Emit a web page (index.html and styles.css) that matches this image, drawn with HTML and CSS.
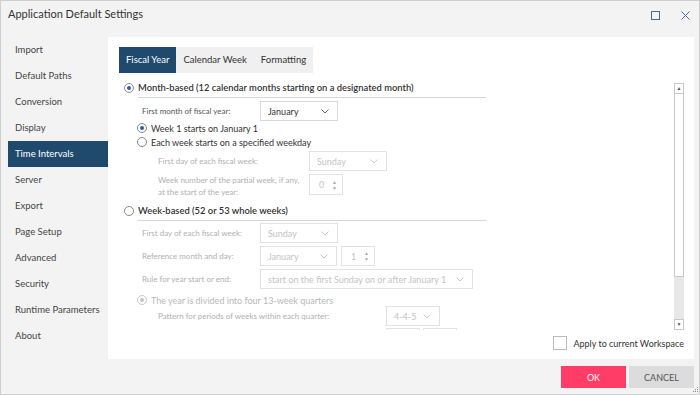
FILE: index.html
```html
<!DOCTYPE html>
<html lang="en">
<head>
    <meta charset="UTF-8">
    <title>Application Default Settings</title>
    <link rel="stylesheet" href="styles.css">
</head>
<body>
    <div class="window">
        <div class="titlebar">
            <span class="title">Application Default Settings</span>
            <div class="win-btns">
                <svg width="9" height="9" viewBox="0 0 9 9"><rect x="0.5" y="0.5" width="8" height="8" fill="none" stroke="#3d6ea3"/></svg>
                <svg width="9" height="9" viewBox="0 0 9 9"><path d="M0.5 0.5L8.5 8.5M8.5 0.5L0.5 8.5" stroke="#3d6ea3"/></svg>
            </div>
        </div>

        <div class="body">
            <ul class="nav">
                <li>Import</li>
                <li>Default Paths</li>
                <li>Conversion</li>
                <li>Display</li>
                <li class="active">Time Intervals</li>
                <li>Server</li>
                <li>Export</li>
                <li>Page Setup</li>
                <li>Advanced</li>
                <li>Security</li>
                <li>Runtime Parameters</li>
                <li>About</li>
            </ul>

            <section class="panel">
                <div class="tabs">
                    <span class="tab active">Fiscal Year</span>
                    <span class="tab">Calendar Week</span>
                    <span class="tab">Formatting</span>
                </div>

                <div class="scroll-area">
                    <div class="scroll-content">
                        <!-- Month based -->
                        <div class="group-head">
                            <span class="radio on"></span>
                            <span class="head-text">Month-based (12 calendar months starting on a designated month)</span>
                        </div>
                        <div class="field first-month">
                            <span class="label">First month of fiscal year:</span>
                            <div class="select w78">January <svg class="chev" width="8" height="5" viewBox="0 0 8 5"><polyline points="0.5,0.5 4,4 7.5,0.5" fill="none" stroke="#666"/></svg></div>
                        </div>
                        <div class="option">
                            <span class="radio on"></span>Week 1 starts on January 1
                        </div>
                        <div class="option">
                            <span class="radio"></span>Each week starts on a specified weekday
                        </div>
                        <div class="field sub disabled gap2">
                            <span class="label">First day of each fiscal week:</span>
                            <div class="select w78">Sunday <svg class="chev" width="8" height="5" viewBox="0 0 8 5"><polyline points="0.5,0.5 4,4 7.5,0.5" fill="none" stroke="#ccc"/></svg></div>
                        </div>
                        <div class="field sub disabled top gap3">
                            <span class="label two-line">Week number of the partial week, if any,<br>at the start of the year:</span>
                            <div class="spinner">0 <span class="arrows">&#9650;<br>&#9660;</span></div>
                        </div>

                        <!-- Week based -->
                        <div class="group-head second">
                            <span class="radio"></span>
                            <span class="head-text">Week-based (52 or 53 whole weeks)</span>
                        </div>
                        <div class="field disabled gap2">
                            <span class="label">First day of each fiscal week:</span>
                            <div class="select w78">Sunday <svg class="chev" width="8" height="5" viewBox="0 0 8 5"><polyline points="0.5,0.5 4,4 7.5,0.5" fill="none" stroke="#ccc"/></svg></div>
                        </div>
                        <div class="field disabled gap3">
                            <span class="label">Reference month and day:</span>
                            <div class="select w77">January <svg class="chev" width="8" height="5" viewBox="0 0 8 5"><polyline points="0.5,0.5 4,4 7.5,0.5" fill="none" stroke="#ccc"/></svg></div>
                            <div class="spinner day">1 <span class="arrows">&#9650;<br>&#9660;</span></div>
                        </div>
                        <div class="field disabled gap3">
                            <span class="label">Rule for year start or end:</span>
                            <div class="select w213">start on the first Sunday on or after January 1 <svg class="chev" width="8" height="5" viewBox="0 0 8 5"><polyline points="0.5,0.5 4,4 7.5,0.5" fill="none" stroke="#ccc"/></svg></div>
                        </div>
                        <div class="option disabled quarters">
                            <span class="radio on"></span>The year is divided into four 13-week quarters
                        </div>
                        <div class="field sub pattern disabled">
                            <span class="label">Pattern for periods of weeks within each quarter:</span>
                            <div class="select w54">4-4-5 <svg class="chev" width="8" height="5" viewBox="0 0 8 5"><polyline points="0.5,0.5 4,4 7.5,0.5" fill="none" stroke="#ccc"/></svg></div>
                        </div>
                        <div class="partial">
                            <div class="select w34"></div>
                            <div class="select w34"></div>
                        </div>
                    </div>

                    <div class="scrollbar">
                        <div class="sb-btn">&#9650;</div>
                        <div class="sb-thumb"></div>
                        <div class="sb-track"></div>
                        <div class="sb-btn down">&#9660;</div>
                    </div>
                </div>

                <label class="apply"><span class="checkbox"></span>Apply to current Workspace</label>
            </section>
        </div>

        <div class="footer">
            <button class="btn ok">OK</button>
            <button class="btn cancel">CANCEL</button>
            <svg class="grip" width="6" height="6" viewBox="0 0 6 6">
                <rect x="5" y="0" width="1" height="1" fill="#888"/>
                <rect x="5" y="2" width="1" height="1" fill="#888"/>
                <rect x="3" y="2" width="1" height="1" fill="#888"/>
                <rect x="5" y="4" width="1" height="1" fill="#888"/>
                <rect x="3" y="4" width="1" height="1" fill="#888"/>
                <rect x="1" y="4" width="1" height="1" fill="#888"/>
            </svg>
        </div>
    </div>
</body>
</html>
```

FILE: styles.css
```css
/* Global */
* {
    box-sizing: border-box;
}

body {
    margin: 0;
    font-family: Lato, "Open Sans", sans-serif;
    color: #333;
    background: #f3f3f3;
}

.window {
    width: 700px;
    height: 395px;
    border: 1px solid #cfcfcf;
    background: #f3f3f3;
    display: flex;
    flex-direction: column;
}

/* Title bar */
.titlebar {
    height: 36px;
    display: flex;
    align-items: flex-start;
    padding: 6px 0 0 7px;
}

.title {
    flex: 1;
    font-size: 11px;
    line-height: 14px;
    color: #333;
}

.win-btns {
    display: flex;
    gap: 21px;
    margin-top: 4px;
    padding-right: 9px;
}

.win-btns svg {
    display: block;
}

/* Body */
.body {
    display: flex;
    height: 322px;
}

.nav {
    width: 100px;
    margin: 0 0 0 7px;
    padding: 0;
    list-style: none;
}

.nav li {
    height: 26px;
    line-height: 26px;
    padding-left: 7px;
    font-size: 9.5px;
    color: #444;
}

.nav li.active {
    background: #1f4a6e;
    color: #fff;
}

.panel {
    flex: 1;
    margin-right: 5px;
    background: #fff;
    padding: 10px 10px 9px 11px;
    display: flex;
    flex-direction: column;
}

/* Tabs */
.tabs {
    display: flex;
    height: 26px;
    align-self: flex-start;
    background: #f0f0f0;
}

.tab {
    padding: 0 7px;
    line-height: 26px;
    font-size: 9.5px;
    color: #333;
}

.tab.active {
    background: #1f4a6e;
    color: #fff;
}

/* Scroll area */
.scroll-area {
    display: flex;
    height: 249px;
    margin-top: 8px;
}

.scroll-content {
    flex: 1;
    overflow: hidden;
    font-size: 9px;
}

.scrollbar {
    width: 10px;
    margin-top: 2px;
    display: flex;
    flex-direction: column;
}

.sb-btn {
    height: 11px;
    border: 1px solid #c8c8c8;
    background: #fff;
    color: #555;
    font-size: 5px;
    line-height: 9px;
    text-align: center;
}

.sb-thumb {
    height: 183px;
    border: 1px solid #c8c8c8;
    border-top: none;
    background: #fff;
}

.sb-track {
    flex: 1;
    background: #e8e8e8;
}

/* Groups */
.group-head {
    display: flex;
    align-items: flex-start;
    padding-left: 5px;
}

.group-head .radio {
    margin-top: 2px;
}

.group-head.second {
    margin-top: 6px;
}

.head-text {
    width: 348px;
    margin-left: 4px;
    font-weight: 600;
    font-size: 9.4px;
    line-height: 14px;
    padding-bottom: 2px;
    border-bottom: 1px solid #d6d6d6;
}

.radio {
    width: 10px;
    height: 10px;
    border: 1px solid #8a8a8a;
    border-radius: 50%;
    background: #fff;
    display: flex;
    align-items: center;
    justify-content: center;
    flex: none;
}

.radio.on::after {
    content: "";
    width: 4px;
    height: 4px;
    border-radius: 50%;
    background: #2a5fa6;
}

.option {
    display: flex;
    align-items: center;
    height: 14px;
    padding-left: 18px;
    gap: 4px;
}

.option.disabled {
    color: #b8b8b8;
}

.option.disabled .radio {
    border-color: #cacaca;
}

.option.disabled .radio::after {
    background: #c4c4c4;
}

.option.quarters {
    height: 12px;
    margin-top: 5px;
}

/* Fields */
.field {
    display: flex;
    align-items: center;
    padding-left: 23px;
}

.field.top {
    align-items: flex-start;
}

.field.first-month {
    margin-top: 3px;
}

.gap2 {
    margin-top: 2px;
}

.gap3 {
    margin-top: 3px;
}

.field .label {
    width: 118px;
    font-size: 8px;
    color: #555;
    flex: none;
}

.field.sub {
    padding-left: 39px;
}

.field.sub .label {
    width: 151px;
}

.field.pattern .label {
    width: 228px;
}

.field.disabled .label {
    color: #b0b0b0;
}

.label.two-line {
    line-height: 12px;
}

.select {
    display: flex;
    align-items: center;
    justify-content: space-between;
    height: 20px;
    border: 1px solid #d9d9d9;
    padding: 0 8px 0 7px;
    font-size: 9px;
    color: #333;
    flex: none;
}

.disabled .select,
.partial .select {
    color: #c4c4c4;
    border-color: #e2e2e2;
}

.w78 { width: 78px; }
.w77 { width: 77px; }
.w213 { width: 213px; }
.w54 { width: 54px; }
.w34 { width: 34px; }

.spinner {
    width: 34px;
    height: 21px;
    border: 1px solid #e2e2e2;
    display: flex;
    align-items: center;
    justify-content: space-between;
    padding: 0 5px 0 9px;
    font-size: 9px;
    color: #c4c4c4;
    flex: none;
}

.spinner.day {
    height: 20px;
    margin-left: 4px;
}

.arrows {
    font-size: 5px;
    line-height: 6px;
    color: #aaa;
    text-align: center;
}

.partial {
    display: flex;
    gap: 3px;
    margin-top: 2px;
    padding-left: 267px;
}

/* Apply checkbox */
.apply {
    display: flex;
    justify-content: flex-end;
    align-items: center;
    margin-top: 6px;
    height: 14px;
    font-size: 9px;
    color: #333;
}

.checkbox {
    width: 14px;
    height: 14px;
    border: 1px solid #bbb;
    background: #fff;
    margin-right: 6px;
}

/* Footer */
.footer {
    height: 35px;
    display: flex;
    justify-content: flex-end;
    align-items: flex-start;
    gap: 3px;
    padding: 7px 5px 0 0;
    position: relative;
}

.btn {
    width: 65px;
    height: 22px;
    border: none;
    font-family: inherit;
    font-size: 9px;
}

.ok {
    background: #ff3d66;
    color: #fff;
}

.cancel {
    background: #dcdcdc;
    color: #555;
}

.grip {
    position: absolute;
    right: 1px;
    bottom: 1px;
}
```
